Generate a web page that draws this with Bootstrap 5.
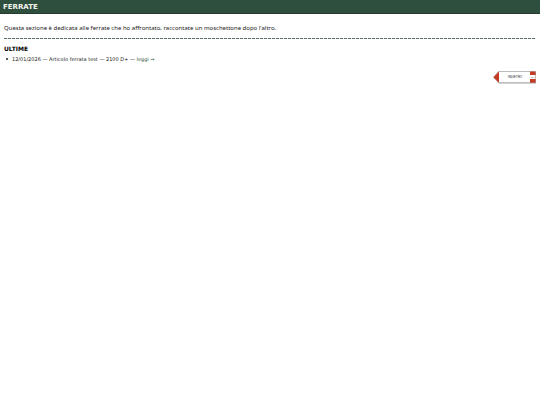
<!DOCTYPE html>
<html lang="it">
<head>
  <meta charset="UTF-8">
  <meta name="viewport" content="width=device-width, initial-scale=1.0">
  <title>Ferrate</title>
  <link href="https://cdn.jsdelivr.net/npm/bootstrap@5.3.0/dist/css/bootstrap.min.css" rel="stylesheet">
  <style>
    body {
      font-family: "DejaVu Sans", Verdana, sans-serif;
      font-size: 6px;
      line-height: 8px;
      color: #222;
      background-color: #fff;
    }
    .testata {
      background-color: #2f4f3e;
      border-bottom: 1px solid #263c31;
      padding: 3px 3px 2px;
    }
    .testata h1 {
      font-size: 7px;
      line-height: 8px;
      color: #f3f5ee;
    }
    .contenuto {
      padding: 10px 4px 4px;
    }
    .introduzione {
      font-family: "Noto Sans", "Open Sans", sans-serif;
    }
    .separatore {
      height: 1px;
      margin: 6px 0;
      background: repeating-linear-gradient(to right, #56706a 0 3px, #e4e8e6 3px 4px);
    }
    .contenuto h2 {
      font-size: 6px;
      line-height: 8px;
      color: #000;
      margin-bottom: 2px;
    }
    .elenco {
      font-size: 5px;
      list-style: none;
      padding-left: 2px;
      margin-bottom: 7px;
    }
    .elenco li {
      display: flex;
      align-items: center;
      gap: 4px;
    }
    .elenco li::before {
      content: "";
      width: 2px;
      height: 2px;
      border-radius: 50%;
      background-color: #222;
    }
    .elenco a {
      color: #2f5a46;
    }
    .cartello {
      width: 44px;
      height: 14px;
    }
  </style>
</head>
<body>
  <header class="testata">
    <h1 class="fw-bold mb-0">FERRATE</h1>
  </header>

  <main class="contenuto">
    <p class="introduzione mb-0">Questa sezione è dedicata alle ferrate che ho affrontato, raccontate un moschettone dopo l'altro.</p>
    <div class="separatore"></div>

    <h2 class="fw-bold">ULTIME</h2>
    <ul class="elenco">
      <li><span>12/01/2026 — Articolo ferrata test — 2100 D+ — <a href="#" class="text-decoration-none">leggi →</a></span></li>
    </ul>

    <div class="d-flex justify-content-end">
      <a href="#" class="d-block lh-1" aria-label="Indietro">
        <!-- segnavia con punta a sinistra -->
        <svg class="cartello d-block" viewBox="0 0 44 14">
          <path d="M7 2.500H44V13.500H7L2 8Z" fill="#bbb"/>
          <path d="M6.500 1.500H43.500V12.700H6.500L1.500 7.200Z" fill="#fff" stroke="#777" stroke-width=".5"/>
          <path d="M7 1.500V12.700L1.500 7.200Z" fill="#c23b22"/>
          <path d="M38 1.500H43.500V12.700H38Z" fill="#c23b22"/>
          <path d="M38 5H43.500V9H38Z" fill="#fff"/>
          <text x="23" y="8" text-anchor="middle" font-family="Liberation Sans, Arial, sans-serif" font-size="3" fill="#222">INDIETRO</text>
          <text x="40.700" y="8" text-anchor="middle" font-family="Liberation Sans, Arial, sans-serif" font-size="2" fill="#222">CAI</text>
        </svg>
      </a>
    </div>
  </main>

  <script src="https://cdn.jsdelivr.net/npm/bootstrap@5.3.0/dist/js/bootstrap.bundle.min.js"></script>
</body>
</html>
